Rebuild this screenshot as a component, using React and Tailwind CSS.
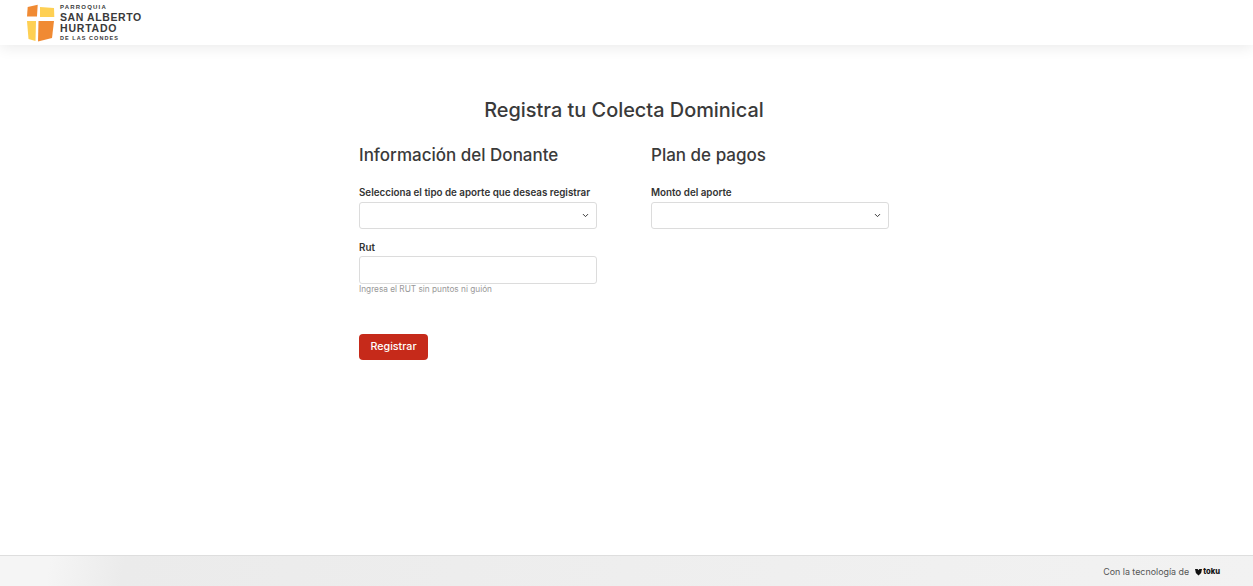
import React from 'react';
import { ChevronDown } from 'lucide-react';

const font = "font-['Inter','Liberation_Sans',sans-serif]";

const Logo = () => (
  <div className="flex items-center gap-[5px]">
    <svg width="28" height="40" viewBox="0 0 28 40">
      <path d="M0.7 4 L10.7 1.7 L10 13.5 L0 13.5 Z" fill="#f08a33" />
      <path d="M13 4 L27 5 L27.3 14 L13 14 Z" fill="#fed054" />
      <path d="M0 18 L9 18 L8.5 38 L1.5 36 Z" fill="#fed054" />
      <path d="M11.5 18 L27 18 L25 35 L11 38.5 Z" fill="#f08a33" />
    </svg>
    <div className="flex flex-col text-[#3a3a3a] font-['Liberation_Sans',sans-serif]">
      <span className="text-[6px] leading-[7px] tracking-[1.2px] font-bold">PARROQUIA</span>
      <span className="text-[10.5px] leading-[11px] mt-[1px] tracking-[0.6px] font-bold">SAN ALBERTO</span>
      <span className="text-[10.5px] leading-[11px] tracking-[0.8px] font-bold">HURTADO</span>
      <span className="text-[5.5px] leading-[7px] mt-[1px] tracking-[1.05px] font-bold">DE LAS CONDES</span>
    </div>
  </div>
);

const SelectField = ({ label }) => (
  <div>
    <label className="block text-[9.8px] leading-[14px] font-semibold text-[#333] mb-[2px]">{label}</label>
    <div className="h-[27px] bg-white border border-[#dcdcdc] rounded-[3px] flex items-center justify-end pr-[6px]">
      <ChevronDown size={9} strokeWidth={2.6} className="text-[#333]" />
    </div>
  </div>
);

export default function App() {
  return (
    <div className={`min-h-screen h-[586px] flex flex-col bg-white ${font}`}>
      <header className="h-[45px] shrink-0 bg-white flex items-center pl-[27px] shadow-[0_2px_14px_rgba(0,0,0,0.09)] z-10">
        <Logo />
      </header>

      <main className="flex-1 pt-[53px]">
        <h1 className="text-center text-[19.9px] leading-[24px] font-medium text-[#3a3a3a] pr-[5px]">
          Registra tu Colecta Dominical
        </h1>
        <div className="w-[530px] ml-[359px] mt-[22px] grid grid-cols-[238px_238px] gap-x-[54px]">
          <div>
            <h2 className="text-[17px] leading-[22px] font-medium text-[#3a3a3a] mb-[20px]">Información del Donante</h2>
            <SelectField label="Selecciona el tipo de aporte que deseas registrar" />
            <div className="mt-[12px]">
              <label className="block text-[9.8px] leading-[14px] font-semibold text-[#333] mb-[1px]">Rut</label>
              <input className="block w-full h-[28px] border border-[#dcdcdc] rounded-[3px] bg-white" />
              <p className="text-[8.25px] leading-[12px] text-[#999] mt-[-1px]">Ingresa el RUT sin puntos ni guión</p>
            </div>
            <button className="mt-[39px] w-[69px] h-[26px] bg-[#c62a1a] rounded-[4px] text-white text-[10.7px] font-medium">
              Registrar
            </button>
          </div>
          <div>
            <h2 className="text-[17px] leading-[22px] font-medium text-[#3a3a3a] mb-[20px]">Plan de pagos</h2>
            <SelectField label="Monto del aporte" />
          </div>
        </div>
      </main>

      <footer className="h-[31px] shrink-0 border-t border-[#dedede] bg-[linear-gradient(100deg,#f5f5f5_4%,#ebebeb_10%,#eeeeee_50%,#f2f2f2_100%)] flex items-center justify-end pr-[33px] pt-[1px] gap-[6px]">
        <span className="text-[8.9px] text-[#555]">Con la tecnología de</span>
        <span className="flex items-center gap-[1px]">
          <svg width="7" height="8" viewBox="0 0 8 8">
            <path d="M0 0.5 L3 0.5 L4 2 L5 0.5 L8 0.5 L7 5 L4 8 L1 5 Z" fill="#111" />
          </svg>
          <span className="text-[7.6px] font-extrabold text-[#111] leading-none">toku</span>
        </span>
      </footer>
    </div>
  );
}
